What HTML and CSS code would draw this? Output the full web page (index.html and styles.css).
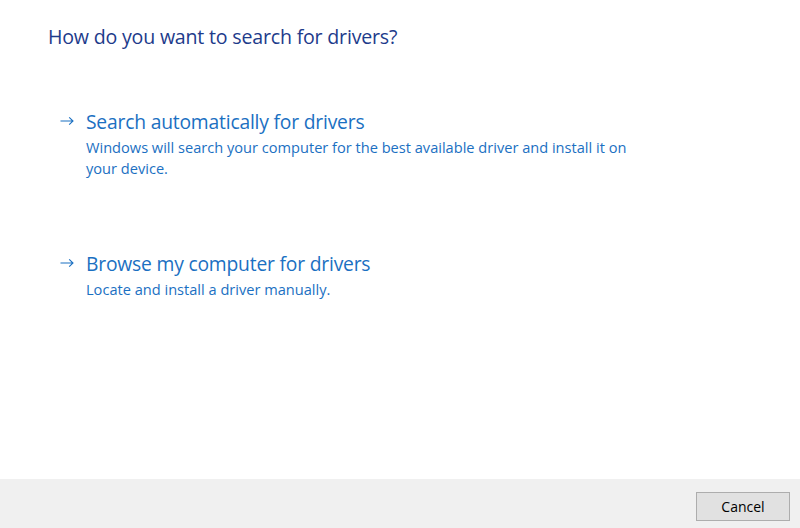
FILE: index.html
```html
<!DOCTYPE html>
<html>
<head>
<meta charset="utf-8">
<link rel="stylesheet" href="styles.css">
</head>
<body>
<div class="dialog">
  <main class="content">
    <h1 class="instruction">How do you want to search for drivers?</h1>
    <div class="options">
      <a class="cmdlink">
        <svg class="arrow" width="14" height="10" viewBox="0 0 14 10"><path d="M0.5 5H13M9.2 1.3L13 5L9.2 8.7" fill="none" stroke="currentColor" stroke-width="1.1"/></svg>
        <span class="text">
          <span class="title">Search automatically for drivers</span>
          <span class="desc">Windows will search your computer for the best available driver and install it on your device.</span>
        </span>
      </a>
      <a class="cmdlink">
        <svg class="arrow" width="14" height="10" viewBox="0 0 14 10"><path d="M0.5 5H13M9.2 1.3L13 5L9.2 8.7" fill="none" stroke="currentColor" stroke-width="1.1"/></svg>
        <span class="text">
          <span class="title">Browse my computer for drivers</span>
          <span class="desc">Locate and install a driver manually.</span>
        </span>
      </a>
    </div>
  </main>
  <footer class="footer">
    <button class="btn">Cancel</button>
  </footer>
</div>
</body>
</html>
```
FILE: styles.css
```css
* { box-sizing: border-box; }
html, body { margin: 0; padding: 0; background: #fff; }
body { font-family: "Open Sans", "Noto Sans", sans-serif; }
.dialog { width: 800px; height: 528px; display: flex; flex-direction: column; }
.content { flex: 1; padding: 22px 0 0 48px; }
.instruction { margin: 0; font-weight: 400; font-size: 19.6px; line-height: 30px; color: #1d3b8b; letter-spacing: -0.2px; }
.options { display: flex; flex-direction: column; gap: 69px; margin-top: 54px; padding-left: 12px; }
.cmdlink { display: flex; align-items: flex-start; color: #1b70c2; text-decoration: none; }
.arrow { flex: none; margin: 10px 12px 0 0; }
.text { display: flex; flex-direction: column; }
.title { font-size: 19.3px; line-height: 31px; letter-spacing: -0.2px; }
.desc { font-size: 14.6px; line-height: 21px; width: 556px; }
.footer { height: 49px; background: #f0f0f0; display: flex; justify-content: flex-end; align-items: flex-start; padding: 13px 10px 0 0; }
.btn { width: 94px; height: 29px; font-family: "Open Sans", sans-serif; font-size: 14px; color: #000; background: #e1e1e1; border: 1px solid #adadad; padding: 0; }
```
